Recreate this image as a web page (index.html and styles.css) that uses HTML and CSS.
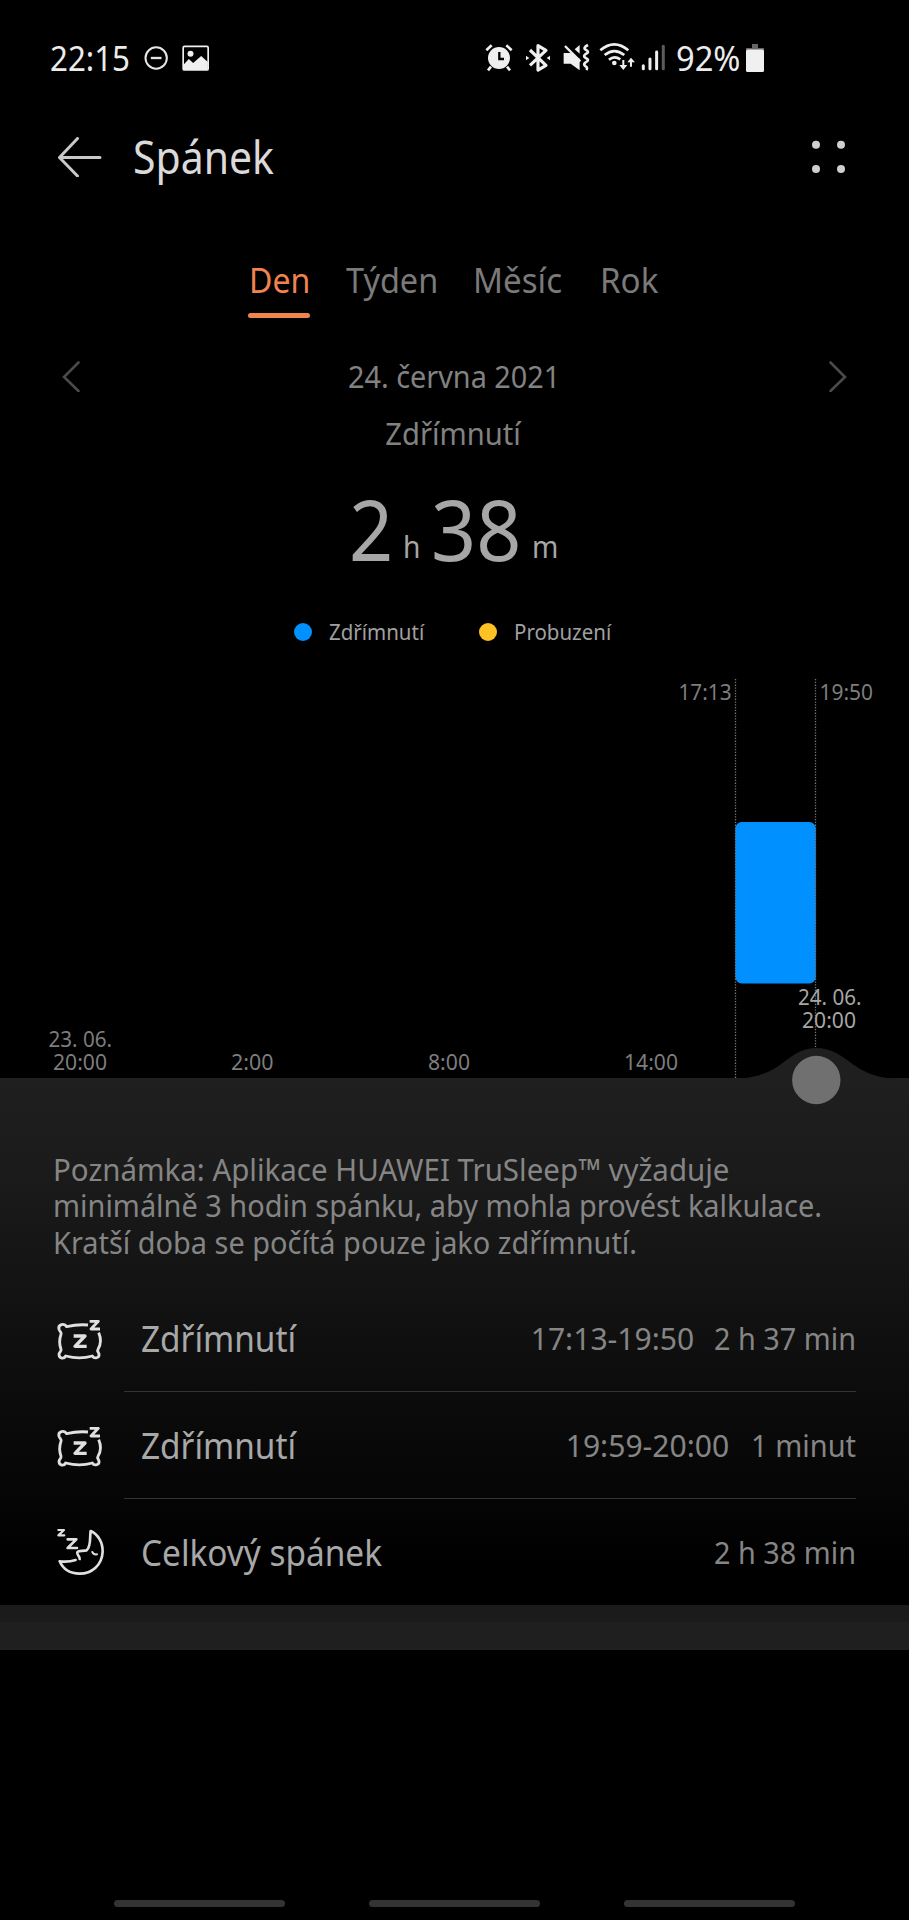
FILE: index.html
```html
<!DOCTYPE html>
<html lang="cs">
<head>
<meta charset="utf-8">
<title>Spánek</title>
<link rel="stylesheet" href="styles.css">
</head>
<body>
<div class="screen">
  <div class="status">
    <span class="clock fit">22:15</span>
    <svg class="st-left" viewBox="340 40 200 84" width="66.7" height="28" fill="none">
      <circle cx="379" cy="82" r="32" stroke="#e6e6e6" stroke-width="6"/>
      <path d="M363 82H395" stroke="#e6e6e6" stroke-width="7"/>
      <rect x="460" y="47" width="75" height="71" rx="4" stroke="#f0f0f0" stroke-width="5"/>
      <circle cx="482" cy="69" r="9" fill="#f0f0f0"/>
      <path d="M461 102L477 85L490 97L514 76L534 94V118H461Z" fill="#f0f0f0"/>
    </svg>
    <svg class="st-right" viewBox="48 36 544 92" width="181.3" height="30.700" fill="none" stroke="#efefef">
      <circle cx="90" cy="84" r="33" fill="#efefef" stroke="none"/>
      <path d="M52 61L68 46M112 46L128 61M66 110L57 121M114 110L123 121" stroke-width="8"/>
      <path d="M91 66V87H105" stroke="#000" stroke-width="7"/>
      <path d="M183 60L231 106L207 120V47L231 61L183 106" stroke-width="9.500" stroke-linejoin="round"/>
      <path d="M171 77L181 84L171 91ZM243 77L233 84L243 91Z" fill="#efefef" stroke="none"/>
      <path d="M284 69H304L332 86V121L305 101H284ZM317 58L332 45V71Z" fill="#efefef" stroke="none"/>
      <path d="M288 48L334 94" stroke-width="7"/>
      <path d="M357 45Q341 53 350 59Q364 66 350 72Q341 78 350 84Q364 90 350 97Q341 103 350 109Q357 113 352 120" stroke-width="8"/>
      <path d="M394 61Q436 25 478 61M407 75Q436 51 466 75M420 89Q436 75 454 88" stroke-width="8"/>
      <circle cx="436" cy="99" r="7" fill="#efefef" stroke="none"/>
      <path d="M463 90V113M486 88V110" stroke-width="6"/>
      <path d="M451 105H475L463 120ZM475 97L486 83L498 97Z" fill="#efefef" stroke="none"/>
      <g stroke-width="9" stroke-linecap="round"><path d="M523 107V116M543 87V116M563 66V116"/><path d="M583 49V116" stroke="#5c5c5c"/></g>
    </svg>
    <span class="battery-text fit">92%</span>
    <svg class="battery" viewBox="0 0 18 28" width="18" height="28"><path d="M6 0H12V4H18V6H0V4H6Z" fill="#666"/><rect y="5.500" width="18" height="22.500" rx="1.500" fill="#f0f0f0"/></svg>
  </div>

  <header class="header">
    <svg class="back" viewBox="0 0 44 40" width="44" height="40" fill="none" stroke="#c9c9c9" stroke-width="3" stroke-linecap="round" stroke-linejoin="round"><path d="M19.500 1.500L1.500 20.500L19.500 39M1.500 20.500H42"/></svg>
    <h1 class="title fit">Spánek</h1>
    <svg class="more" viewBox="0 0 34 34" width="34" height="34" fill="#cfcfcf"><circle cx="4" cy="4.700" r="4"/><circle cx="29" cy="4.700" r="4"/><circle cx="4" cy="29" r="4"/><circle cx="29" cy="29" r="4"/></svg>
  </header>

  <nav class="tabs">
    <div class="tab tab-day active"><span class="fit">Den</span></div>
    <div class="tab tab-week"><span class="fit">Týden</span></div>
    <div class="tab tab-month"><span class="fit">Měsíc</span></div>
    <div class="tab tab-year"><span class="fit">Rok</span></div>
  </nav>

  <div class="date-row">
    <svg viewBox="0 0 18 32" width="18" height="32" class="chev"><path d="M16.500 2.500L2 17L16.500 31"/></svg>
    <span class="date fit-c">24. června 2021</span>
    <svg viewBox="0 0 18 32" width="18" height="32" class="chev"><path d="M1.500 2.500L16 17L1.500 31"/></svg>
  </div>
  <div class="kind"><span class="fit-c">Zdřímnutí</span></div>

  <div class="total">
    <span class="num hours fit">2</span><span class="unit unit-h fit">h</span><span class="num minutes fit">38</span><span class="unit fit">m</span>
  </div>

  <div class="legend">
    <i class="dot dot-nap"></i><span class="legend-nap fit">Zdřímnutí</span>
    <i class="dot dot-wake"></i><span class="legend-wake fit">Probuzení</span>
  </div>

  <svg class="chart" viewBox="0 668 909 440" width="909" height="440">
    <rect x="735.300" y="822" width="80.500" height="161.500" rx="6.500" fill="#0090ff"/>
    <path class="bump" d="M735 1079C773 1077 781 1062 797 1053Q816 1043 836 1053C853 1062 862 1077 897 1079Z"/>
    <path class="guide" d="M735.500 679V1078M815.500 679V1048"/>
    <g class="axis">
      <text x="678.500" y="700" textLength="53" lengthAdjust="spacingAndGlyphs">17:13</text>
      <text x="819.500" y="700" textLength="53.500" lengthAdjust="spacingAndGlyphs">19:50</text>
      <text x="48.500" y="1047" textLength="63.500" lengthAdjust="spacingAndGlyphs">23. 06.</text>
      <text x="53" y="1070" textLength="54" lengthAdjust="spacingAndGlyphs">20:00</text>
      <text x="231" y="1070" textLength="42.500" lengthAdjust="spacingAndGlyphs">2:00</text>
      <text x="428" y="1070" textLength="42" lengthAdjust="spacingAndGlyphs">8:00</text>
      <text x="624" y="1070" textLength="54" lengthAdjust="spacingAndGlyphs">14:00</text>
      <text class="lit" x="798" y="1005" textLength="63.500" lengthAdjust="spacingAndGlyphs">24. 06.</text>
      <text class="lit" x="802" y="1027.500" textLength="54" lengthAdjust="spacingAndGlyphs">20:00</text>
    </g>
    <circle cx="816.300" cy="1080" r="24.200" fill="#707070"/>
  </svg>

  <section class="panel">
    <p class="note">
      <span class="line line-1 fit">Poznámka: Aplikace HUAWEI TruSleep™ vyžaduje</span>
      <span class="line line-2 fit">minimálně 3 hodin spánku, aby mohla provést kalkulace.</span>
      <span class="line line-3 fit">Kratší doba se počítá pouze jako zdřímnutí.</span>
    </p>
    <div class="row">
      <div class="icon"><svg viewBox="80 530 138 126" width="46" height="42"><use href="#pillow"/></svg></div>
      <div class="row-body"><span class="label fit">Zdřímnutí</span><span class="range fit-r">17:13-19:50</span><span class="value value-hm fit-r">2 h 37 min</span></div>
    </div>
    <div class="row">
      <div class="icon"><svg viewBox="80 530 138 126" width="46" height="42"><use href="#pillow"/></svg></div>
      <div class="row-body"><span class="label fit">Zdřímnutí</span><span class="range fit-r">19:59-20:00</span><span class="value value-m fit-r">1 minut</span></div>
    </div>
    <div class="row last">
      <div class="icon"><svg viewBox="80 415 142 143" width="47.300" height="47.700" fill="none" stroke="#e0e0e0" stroke-width="8" stroke-linejoin="round" stroke-linecap="round">
        <path d="M148 508C149 500 139 496 141 488C143 482 157 485 169 482C183 470 178 441 181 424C203 434 218 458 217 487C215 526 185 552 148 552C120 552 98 538 88 515Q115 518 136 511"/>
        <path d="M186 487Q190 496 200 494" stroke-width="6"/>
        <path d="M84 421H101L84 437H102" stroke-width="6.500"/>
        <path d="M112 449H138L112 475H140" stroke-width="8"/>
      </svg></div>
      <div class="row-body"><span class="label fit">Celkový spánek</span><span class="value value-hm fit-r">2 h 38 min</span></div>
    </div>
  </section>
  <div class="strip"></div>
  <div class="gesture"><i></i><i></i><i></i></div>
</div>

<svg class="defs" width="0" height="0">
  <defs>
    <g id="pillow" fill="none" stroke="#e0e0e0" stroke-width="8.500" stroke-linejoin="round">
      <path d="M173 551Q142 548 109 556C102 544 82 549 86 564C88 570 95 573 92 579Q84 602 92 624C94 630 86 632 86 639C86 652 101 654 106 644Q148 655 186 644C192 654 208 650 206 638C205 632 199 630 203 624Q217 601 205 574"/>
      <path d="M130 584H164L134 615H169" stroke-width="10"/>
      <path d="M178 540H204L182 563H209" stroke-width="8.500"/>
    </g>
  </defs>
</svg>
</body>
</html>
```
FILE: styles.css
```css
* { box-sizing: border-box; }

body {
  margin: 0;
  background: #000;
  color: #858585;
  font-family: "Noto Sans", "Open Sans", sans-serif;
}

.screen {
  width: 909px;
  height: 1920px;
  overflow: hidden;
  display: flex;
  flex-direction: column;
}

.screen > * { flex-shrink: 0; }

/* Narrowed lettering, anchored at the left, centre or right */
.fit, .fit-c, .fit-r {
  display: block;
  white-space: nowrap;
  transform: scaleX(0.94);
}
.fit { transform-origin: left; }
.fit-c { transform-origin: center; }
.fit-r { transform-origin: right; }

.defs { position: absolute; }

/* Status bar */
.status {
  height: 115px;
  padding-left: 50px;
  display: flex;
  align-items: center;
  color: #ececec;
  font-size: 34px;
}
.clock { width: 93px; transform: scaleX(0.92); }
.st-left { width: 67px; }
.st-right { margin-left: 275px; }
.battery-text { width: 69px; margin-left: 10px; transform: scaleX(0.96); }
.battery { margin-left: 1px; }

/* Header */
.header {
  height: 83px;
  padding: 0 63px 0 58px;
  display: flex;
  align-items: center;
}
.title {
  margin: 0 auto 0 31px;
  font-size: 45px;
  font-weight: 400;
  color: #dadada;
  transform: scaleX(0.91);
}

/* Period tabs */
.tabs {
  margin-top: 49px;
  padding-left: 248px;
  display: flex;
  height: 71px;
  font-size: 34.5px;
  line-height: 66px;
  color: #7a7a7a;
}
.tab-day { width: 98px; color: #f28350; }
.tab-day .fit { margin-left: 1px; transform: scaleX(0.93); }
.tab-week { width: 127px; }
.tab-month { width: 127px; }
.tab-month .fit { transform: scaleX(0.96); }
.tab-year .fit { transform: scaleX(0.96); }
.tab.active::after {
  content: "";
  display: block;
  width: 62px;
  height: 5px;
  border-radius: 2.5px;
  background: #f28350;
}

/* Date and session kind */
.date-row {
  margin-top: 29px;
  height: 58px;
  padding: 0 62px;
  display: flex;
  align-items: center;
  justify-content: space-between;
  font-size: 31px;
  color: #828282;
}
.chev { fill: none; stroke: #4a4a4a; stroke-width: 2.6; stroke-linecap: round; }
.date { transform: scaleX(0.93); }
.kind {
  height: 57px;
  display: flex;
  justify-content: center;
  padding-right: 2px;
  font-size: 31px;
  line-height: 57px;
  color: #828282;
}

/* Total duration */
.total {
  height: 133px;
  padding-left: 349px;
  display: flex;
  color: #a6a6a6;
}
.num { font-size: 84px; line-height: 133px; }
.hours { width: 54px; transform: scaleX(0.92); }
.minutes { width: 101px; }
.unit { font-size: 30px; line-height: 133px; padding-top: 18px; }
.unit-h { width: 28px; }

/* Legend */
.legend {
  height: 73px;
  padding-left: 294px;
  display: flex;
  align-items: center;
  font-size: 22.5px;
  color: #a0a0a0;
}
.dot { width: 18px; height: 18px; border-radius: 50%; }
.dot-nap { background: #0090ff; }
.dot-wake { background: #fec227; }
.legend-nap { width: 149px; margin-left: 17px; transform: scaleX(0.91); }
.legend-wake { margin-left: 17px; transform: scaleX(0.91); }
.dot-wake { margin-left: 1px; }

/* Chart: the lower edge of the drawing laps over the panel */
.chart {
  position: relative;
  z-index: 1;
  margin-bottom: -30px;
}
.bump { fill: #1f1f1f; }
.guide { fill: none; stroke: #777; stroke-width: 1.3; stroke-dasharray: 1.3 1.5; }
.axis { font-size: 22.5px; fill: #7d7d7d; }
.axis .lit { fill: #a6a6a6; }

/* Details */
.panel {
  height: 527px;
  padding: 73px 53px 0 57px;
  background: linear-gradient(#1f1f1f 0%, #1c1c1c 14%, #121212 43%, #0b0b0b 62%, #050505 80%, #000 93%);
}
.note {
  margin: 0 0 25px -4px;
  height: 109px;
  font-size: 31px;
  line-height: 36.3px;
  color: #858585;
}
.line-1 { transform: scaleX(0.951); }
.line-2 { transform: scaleX(0.933); }
.line-3 { transform: scaleX(0.933); }

.row {
  height: 107px;
  display: flex;
  align-items: center;
}
.row.last { height: 106px; }
.icon { width: 67px; flex: none; }
.icon svg { display: block; overflow: visible; }
.row-body {
  flex: 1;
  height: 100%;
  padding-left: 17px;
  display: flex;
  align-items: center;
  border-bottom: 1px solid #333;
}
.last .row-body { border-bottom: 0; }
.label {
  margin-right: auto;
  font-size: 35.5px;
  color: #a8a8a8;
}
.range, .value { padding-bottom: 2px; font-size: 31.5px; color: #858585; }
.range { transform: scaleX(0.955); }
.value { text-align: right; }
.value-hm { width: 162px; transform: scaleX(0.915); }
.value-m { width: 127px; transform: scaleX(0.92); }

.strip {
  height: 45px;
  background: linear-gradient(#1b1b1b 17px, #1f1f1f 17px);
}

.gesture {
  margin-top: 250px;
  padding-left: 114px;
  display: flex;
  gap: 84px;
}
.gesture i { width: 171px; height: 7px; border-radius: 4px; background: #333; }
```
